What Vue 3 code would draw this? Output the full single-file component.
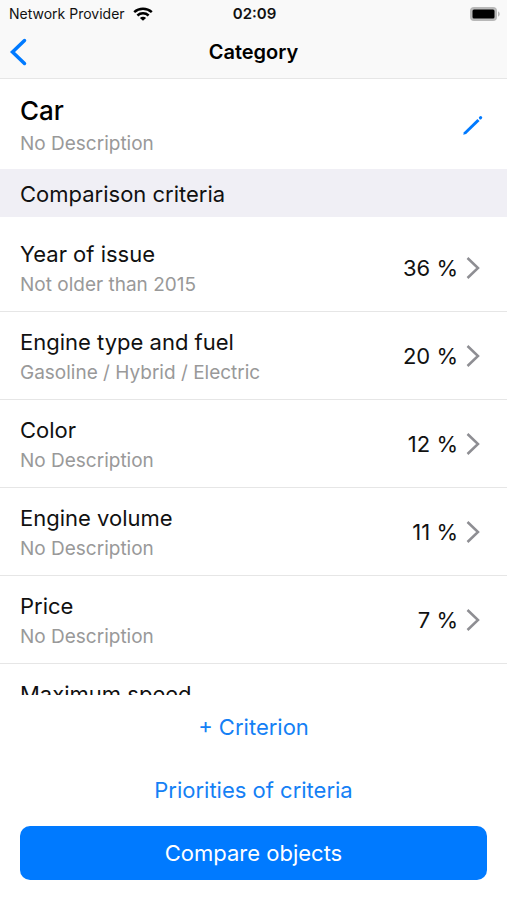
<script setup>
const criteria = [
  { name: 'Year of issue', description: 'Not older than 2015', weight: 36 },
  { name: 'Engine type and fuel', description: 'Gasoline / Hybrid / Electric', weight: 20 },
  { name: 'Color', description: 'No Description', weight: 12 },
  { name: 'Engine volume', description: 'No Description', weight: 11 },
  { name: 'Price', description: 'No Description', weight: 7 },
  { name: 'Maximum speed', description: 'No Description', weight: 6 },
]
</script>

<template>
  <div class="screen">
    <header class="top">
      <div class="status">
        <div class="carrier">
          <span>Network Provider</span>
          <svg class="wifi" viewBox="0 0 20 14" aria-hidden="true">
            <path d="M1.200 5.200C6.200.6 13.800.6 18.800 5.200" />
            <path d="M4.400 8.500c3.200-2.900 8-2.900 11.200 0" />
            <path class="dot" d="M10 13.800 6.900 10.900c1.800-1.600 4.400-1.600 6.200 0z" />
          </svg>
        </div>
        <span class="time">02:09</span>
        <svg class="battery" viewBox="0 0 30 14" aria-hidden="true">
          <rect class="shell" width="27" height="14" rx="4" />
          <path class="shell" d="M28 4.500c2.300.6 2.300 4.400 0 5z" />
          <rect class="charge" x="2.500" y="2.500" width="22" height="9" rx="1.500" />
        </svg>
      </div>
      <nav class="nav">
        <button class="back" type="button" aria-label="Back">
          <svg viewBox="0 0 18 28" aria-hidden="true"><path d="M15.500 2.500 3.500 14l12 11.500" /></svg>
        </button>
        <h1>Category</h1>
      </nav>
    </header>

    <section class="category">
      <div class="texts">
        <h2>Car</h2>
        <p class="description">No Description</p>
      </div>
      <button class="edit" type="button" aria-label="Edit category">
        <svg viewBox="0 0 22 22" aria-hidden="true">
          <path class="body" d="M1.200 21.800 1.900 19.200 15.400 5.900 17.600 8.100 4.100 21z" />
          <path class="cap" d="M18.400 4.900l.3-.3" />
        </svg>
      </button>
    </section>

    <h3 class="section-title">Comparison criteria</h3>

    <ul class="list">
      <li v-for="item in criteria" :key="item.name">
        <button class="row" type="button">
          <span class="texts">
            <span class="name">{{ item.name }}</span>
            <span class="description">{{ item.description }}</span>
          </span>
          <span class="weight">{{ item.weight }} %</span>
          <svg class="chevron" viewBox="0 0 14 24" aria-hidden="true"><path d="M1.500 2 12 12 1.500 22" /></svg>
        </button>
      </li>
    </ul>

    <footer class="actions">
      <button class="link" type="button">+ Criterion</button>
      <button class="link" type="button">Priorities of criteria</button>
      <button class="primary" type="button">Compare objects</button>
    </footer>
  </div>
</template>

<style>
body {
  margin: 0;
  background: #fff;
}
</style>

<style scoped>
.screen {
  display: flex;
  flex-direction: column;
  height: 100vh;
  background: #fff;
  color: #111;
  font-family: Inter, "Liberation Sans", sans-serif;
  font-size: 22px;
  line-height: 28px;
}

h1,
h2,
h3,
p,
ul {
  margin: 0;
  padding: 0;
  font-weight: 400;
}

button {
  padding: 0;
  border: 0;
  background: none;
  color: inherit;
  font: inherit;
  cursor: pointer;
}

svg {
  display: block;
  fill: none;
}

.top {
  border-bottom: 1px solid #e6e6e6;
  background: #f9f9f9;
}

.status {
  display: grid;
  grid-template-columns: 1fr auto 1fr;
  align-items: center;
  height: 26px;
  padding: 0 7px 0 9px;
  font-size: 14px;
  line-height: 28px;
}

.carrier {
  display: flex;
  align-items: center;
  gap: 8px;
}

.wifi {
  width: 20px;
  height: 14px;
  stroke: #000;
  stroke-width: 2.500;
}

.wifi .dot {
  fill: #000;
  stroke: none;
}

.time {
  font-size: 15px;
  font-weight: 600;
}

.battery {
  justify-self: end;
  width: 30px;
  height: 14px;
}

.shell {
  fill: #b8b8b8;
}

.charge {
  fill: #000;
}

.nav {
  display: grid;
  grid-template-columns: 1fr auto 1fr;
  align-items: center;
  height: 52px;
  padding: 0 9px;
}

.nav h1 {
  font-size: 20px;
  font-weight: 600;
  line-height: 30px;
  color: #000;
}

.back {
  justify-self: start;
}

.back svg {
  width: 18px;
  height: 28px;
  stroke: #007aff;
  stroke-width: 3.500;
  stroke-linecap: round;
}

.category {
  display: flex;
  align-items: center;
  height: 90px;
  padding: 0 23px 0 20px;
}

.texts {
  display: flex;
  flex: 1;
  flex-direction: column;
  gap: 4px;
  padding-top: 3px;
  text-align: left;
}

.category .texts {
  gap: 6px;
  padding-top: 5px;
}

.category h2 {
  font-size: 26px;
  font-weight: 500;
  color: #000;
}

.description {
  color: #999;
  font-size: 19px;
  line-height: 26px;
}

.edit svg {
  width: 22px;
  height: 22px;
}

.edit .body {
  fill: #007aff;
}

.edit .cap {
  stroke: #007aff;
  stroke-width: 3;
  stroke-linecap: round;
}

.section-title {
  padding: 11px 20px 9px;
  background: #f0eff5;
  font-size: 22px;
}

.list {
  flex: 1;
  min-height: 0;
  padding-top: 7px;
  overflow-y: auto;
  list-style: none;
  scrollbar-width: none;
}

.row {
  display: flex;
  align-items: center;
  width: 100%;
  height: 88px;
  padding: 0 27px 0 20px;
  border-bottom: 1px solid #e6e6e6;
}

.weight {
  margin-right: 8px;
}

.chevron {
  width: 14px;
  height: 24px;
  stroke: #8e8e93;
  stroke-width: 2.500;
}

.actions {
  display: flex;
  flex-direction: column;
  padding: 0 20px 20px;
}

.link {
  height: 63px;
  color: #1480f5;
}

.primary {
  height: 54px;
  margin-top: 5px;
  border-radius: 10px;
  background: #007aff;
  color: #fff;
}
</style>
